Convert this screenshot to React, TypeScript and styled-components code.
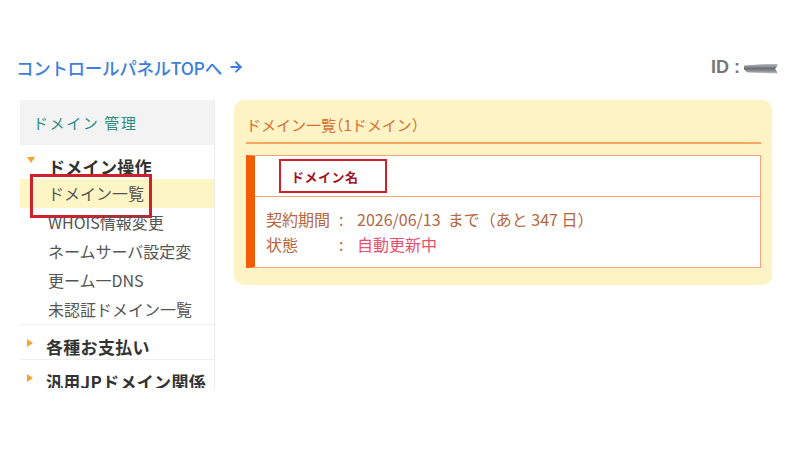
import styled, { createGlobalStyle } from 'styled-components'
import { ArrowRight } from 'lucide-react'

const GlobalStyle = createGlobalStyle`
  html, body {
    margin: 0;
    padding: 0;
    background: #ffffff;
  }
  body {
    font-family: 'Noto Sans CJK JP', 'Noto Sans', sans-serif;
  }
`

const Page = styled.div`
  width: 800px;
  height: 450px;
  box-sizing: border-box;
  padding-top: 55px;
`

const TopBar = styled.div`
  display: flex;
  justify-content: space-between;
  align-items: center;
  padding: 0 22px 0 16px;
  height: 24px;
`

const TopLink = styled.a`
  display: flex;
  align-items: center;
  gap: 6px;
  color: #3d7fdc;
  font-size: 17.5px;
  font-weight: 500;
  text-decoration: none;
  letter-spacing: -0.3px;
`

const UserId = styled.div`
  display: flex;
  align-items: center;
  gap: 4px;
  color: #777;
  font-size: 18px;
  font-weight: bold;
  font-family: 'Liberation Sans', 'Noto Sans CJK JP', sans-serif;
`

const Redacted = styled.span`
  display: inline-block;
  width: 34px;
  height: 10px;
  margin-top: 3px;
  background: linear-gradient(180deg, #b8bcc0 0%, #6d7175 45%, #8d9196 70%, #c9ccd0 100%);
  clip-path: polygon(0 20%, 85% 0, 100% 10%, 92% 55%, 100% 100%, 10% 90%, 0 60%);
`

const Content = styled.div`
  display: flex;
  align-items: flex-start;
  gap: 19px;
  margin-top: 21px;
  padding-left: 20px;
`

const Sidebar = styled.nav`
  width: 194px;
  height: 288px;
  overflow: hidden;
  border-right: 1px solid #ececec;
  background: #fff;
`

const SideHeader = styled.div`
  height: 45px;
  display: flex;
  align-items: center;
  padding-left: 13px;
  background: #f3f3f3;
  color: #2e8c80;
  font-size: 15px;
  letter-spacing: 1.6px;
`

const Group = styled.div<{ $first?: boolean }>`
  border-top: ${(p) => (p.$first ? 'none' : '1px solid #efefef')};
`

const GroupTitle = styled.div`
  display: flex;
  align-items: flex-start;
  padding: 10px 0 0 7px;
  height: 24px;
  line-height: 24px;
  color: #333;
  font-size: 17px;
  font-weight: bold;
  letter-spacing: 0.3px;
`

const Caret = styled.span<{ $open?: boolean }>`
  width: 0;
  height: 0;
  margin: 2px 13px 0 0;
  ${(p) =>
    p.$open
      ? `border-left: 4px solid transparent;
         border-right: 4px solid transparent;
         border-top: 6px solid #f4a62a;`
      : `border-top: 4px solid transparent;
         border-bottom: 4px solid transparent;
         border-left: 6px solid #f4a62a;
         margin-top: 4px;`}
`

const ItemList = styled.ul`
  list-style: none;
  margin: 0;
  padding: 0;
`

const Item = styled.li<{ $active?: boolean }>`
  position: relative;
  height: 29px;
  line-height: 29px;
  padding-left: 28px;
  color: #555;
  font-size: 16px;
  white-space: nowrap;
  background: ${(p) => (p.$active ? '#fdf6c4' : 'transparent')};
`

const Highlight = styled.span`
  position: absolute;
  left: 10px;
  top: -5px;
  width: 122px;
  height: 44px;
  border: 3px solid #d0202b;
  box-sizing: border-box;
`

const Main = styled.section`
  width: 538px;
  box-sizing: border-box;
  padding: 14px 11px 17px 12px;
  background: #fef3c5;
  border-radius: 10px;
`

const MainTitle = styled.h2`
  margin: 0;
  padding-bottom: 6px;
  color: #d6702e;
  font-size: 15px;
  font-weight: normal;
  line-height: 22px;
  border-bottom: 2px solid #f6a862;
`

const Paren = styled.span`
  font-feature-settings: 'halt' 1;
`

const DomainBox = styled.div`
  margin-top: 11px;
  background: #fff;
  border: 1px solid #f0a67c;
  border-left: 9px solid #f35b06;
`

const DomainHead = styled.div`
  height: 40px;
  display: flex;
  align-items: center;
  padding-left: 24px;
  border-bottom: 1px solid #f0a67c;
`

const DomainName = styled.span`
  display: flex;
  align-items: center;
  box-sizing: border-box;
  width: 108px;
  height: 34px;
  padding-left: 10px;
  border: 2px solid #d31f2b;
  color: #a01629;
  font-family: 'Liberation Serif', 'Noto Sans CJK JP', serif;
  font-size: 13px;
  font-weight: bold;
  letter-spacing: 0.5px;
`

const DomainBody = styled.div`
  display: grid;
  grid-template-columns: 71px 20px auto;
  padding: 10px 0 10px 11px;
  line-height: 25px;
  font-size: 16px;
  color: #b56640;
`

const Colon = styled.span`
  padding-left: 2px;
`

const Value = styled.span<{ $alert?: boolean }>`
  white-space: pre;
  color: ${(p) => (p.$alert ? '#e8506d' : '#b56640')};
`

const App = () => {
  return (
    <Page>
      <GlobalStyle />
      <TopBar>
        <TopLink href="#">
          コントロールパネルTOPへ
          <ArrowRight size={16} strokeWidth={3} />
        </TopLink>
        <UserId>
          ID :<Redacted />
        </UserId>
      </TopBar>
      <Content>
        <Sidebar>
          <SideHeader>ドメイン 管理</SideHeader>
          <Group $first>
            <GroupTitle>
              <Caret $open />
              ドメイン操作
            </GroupTitle>
            <ItemList>
              <Item $active>
                ドメイン一覧
                <Highlight />
              </Item>
              <Item>WHOIS情報変更</Item>
              <Item>ネームサーバ設定変</Item>
              <Item>更ーム一DNS</Item>
              <Item>未認証ドメイン一覧</Item>
            </ItemList>
          </Group>
          <Group>
            <GroupTitle>
              <Caret />
              各種お支払い
            </GroupTitle>
          </Group>
          <Group>
            <GroupTitle>
              <Caret />
              汎用JPドメイン関係
            </GroupTitle>
          </Group>
        </Sidebar>
        <Main>
          <MainTitle>
            ドメイン一覧<Paren>（</Paren>1ドメイン<Paren>）</Paren>
          </MainTitle>
          <DomainBox>
            <DomainHead>
              <DomainName>ドメイン名</DomainName>
            </DomainHead>
            <DomainBody>
              <span>契約期間</span>
              <Colon>:</Colon>
              <Value>2026/06/13  まで（あと 347 日）</Value>
              <span>状態</span>
              <Colon>:</Colon>
              <Value $alert>自動更新中</Value>
            </DomainBody>
          </DomainBox>
        </Main>
      </Content>
    </Page>
  )
}

export default App
